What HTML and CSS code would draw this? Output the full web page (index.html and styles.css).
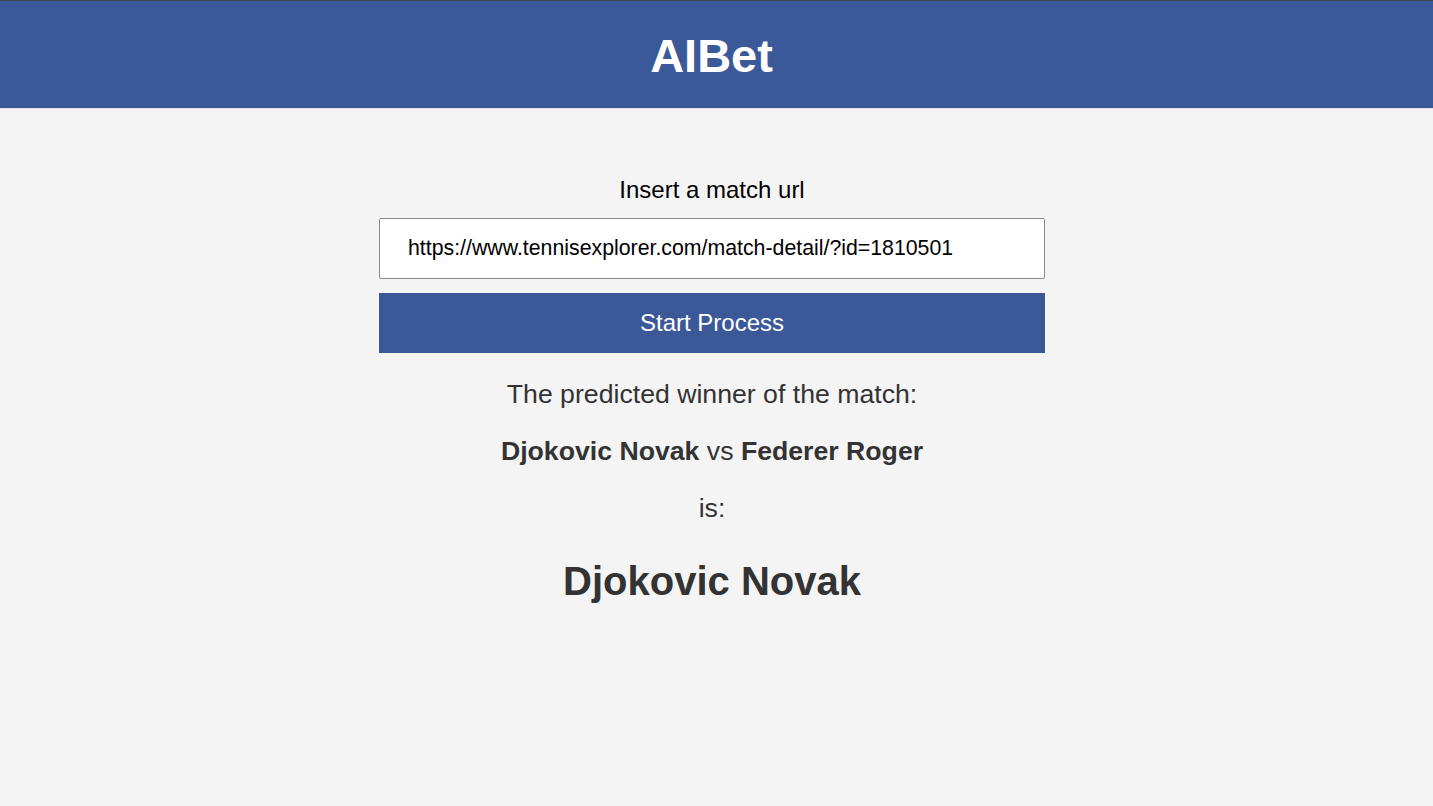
FILE: index.html
```html
<!DOCTYPE html>
<html lang="en">
<head>
<meta charset="utf-8">
<title>AIBet</title>
<link rel="stylesheet" href="styles.css">
</head>
<body>
<header class="topbar">
  <h1 class="brand">AIBet</h1>
</header>
<main class="content">
  <form class="match-form" onsubmit="return false;">
    <label class="form-label" for="url">Insert a match url</label>
    <input class="url-input" id="url" type="text" value="https://www.tennisexplorer.com/match-detail/?id=1810501">
    <button class="start-btn" type="submit">Start Process</button>
  </form>
  <section class="result">
    <p class="result-intro">The predicted winner of the match:</p>
    <p class="result-match"><strong>Djokovic Novak</strong> vs <strong>Federer Roger</strong></p>
    <p class="result-is">is:</p>
    <h2 class="result-winner">Djokovic Novak</h2>
  </section>
</main>
</body>
</html>
```
FILE: styles.css
```css
html, body {
  margin: 0;
  padding: 0;
}
body {
  background: #f4f4f4;
  font-family: "Liberation Sans", Arial, Helvetica, sans-serif;
  color: #333;
  height: 806px;
  overflow: hidden;
}
.topbar {
  background: #3b5998;
  border-top: 1px solid #3c4550;
  border-bottom: 1px solid #dde2ec;
  height: 107px;
  padding-right: 10px;
  display: flex;
  align-items: center;
  justify-content: center;
}
.brand {
  margin: 0;
  color: #fff;
  font-size: 47px;
  font-weight: bold;
  line-height: 1;
  position: relative;
  top: 1px;
}
.content {
  display: flex;
  flex-direction: column;
  align-items: center;
  padding-right: 9px;
}
.match-form {
  width: 666px;
  display: flex;
  flex-direction: column;
  align-items: stretch;
  margin-top: 65px;
}
.form-label {
  text-align: center;
  color: #000;
  font-size: 24px;
  line-height: 32px;
  margin-bottom: 12px;
}
.url-input {
  box-sizing: border-box;
  height: 61px;
  border: 1px solid #8a8a8a;
  border-radius: 2px;
  background: #fff;
  padding: 0 28px;
  font-family: "Liberation Sans", Arial, Helvetica, sans-serif;
  font-size: 21.3px;
  color: #000;
  outline: none;
}
.start-btn {
  margin-top: 14px;
  height: 60px;
  border: none;
  background: #3b5998;
  color: #fff;
  font-family: "Liberation Sans", Arial, Helvetica, sans-serif;
  font-size: 24px;
  padding: 0;
}
.result {
  text-align: center;
  margin-top: 25px;
}
.result-intro,
.result-match,
.result-is {
  margin: 0;
  font-size: 26.67px;
  line-height: 32px;
}
.result-match {
  margin-top: 25px;
}
.result-is {
  margin-top: 25px;
}
.result-winner {
  margin: 34px 0 0;
  font-size: 40px;
  line-height: 46px;
  font-weight: bold;
}
```
